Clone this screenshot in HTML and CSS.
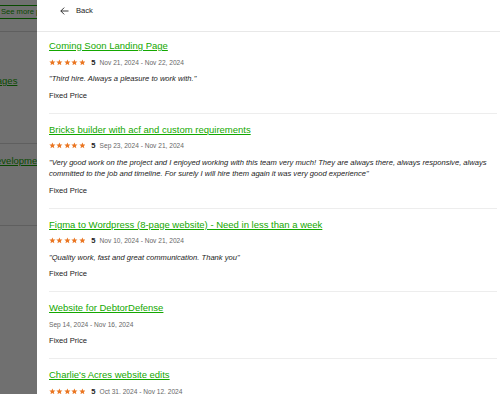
FILE: index.html
```html
<!DOCTYPE html>
<html lang="en">
  <head>
    <meta charset="UTF-8" />
    <meta name="viewport" content="width=device-width, initial-scale=1.0" />
    <title>Work history</title>
    <link rel="stylesheet" href="styles.css">
  </head>
  <body>
    <div class="page">
      <div class="bgTop">
        <span class="bgBtn">See more projects</span>
      </div>
      <div class="bgJob first">
        <a class="bgLink">Landing Pages</a>
        <p class="bgQuote">"Great work."</p>
      </div>
      <div class="bgJob second">
        <a class="bgLink">Website development</a>
      </div>
    </div>
    <div class="overlay"></div>
    <aside class="drawer">
      <div class="drawerHead">
        <button class="back">
          <svg width="9" height="8" viewBox="0 0 9 8" fill="none" stroke="#222" stroke-width="0.9">
            <path d="M8.5 4H0.8M4.2 0.6L0.8 4l3.4 3.4" />
          </svg>
          Back
        </button>
      </div>
      <ul class="history" id="history"></ul>
    </aside>
    <script>
      const jobs = [
        {
          title: "Coming Soon Landing Page",
          rating: 5,
          dates: "Nov 21, 2024 - Nov 22, 2024",
          quote: "\"Third hire. Always a pleasure to work with.\"",
        },
        {
          title: "Bricks builder with acf and custom requirements",
          rating: 5,
          dates: "Sep 23, 2024 - Nov 21, 2024",
          quote:
            "\"Very good work on the project and I enjoyed working with this team very much! They are always there, always responsive, always committed to the job and timeline. For surely I will hire them again it was very good experience\"",
        },
        {
          title: "Figma to Wordpress (8-page website) - Need in less than a week",
          rating: 5,
          dates: "Nov 10, 2024 - Nov 21, 2024",
          quote: "\"Quality work, fast and great communication. Thank you\"",
        },
        {
          title: "Website for DebtorDefense",
          rating: null,
          dates: "Sep 14, 2024 - Nov 16, 2024",
          quote: null,
        },
        {
          title: "Charlie's Acres website edits",
          rating: 5,
          dates: "Oct 31, 2024 - Nov 12, 2024",
          quote: "\"Great job, thanks!\"",
        },
      ];
      const star =
        '<svg class="star" viewBox="0 0 24 24"><path d="M12 1.5l3.1 7.1 7.7.6-5.9 5 1.8 7.6L12 17.8l-6.7 4 1.8-7.6-5.9-5 7.7-.6z"/></svg>';
      const list = document.getElementById("history");
      let html = "";
      for (let job of jobs) {
        let meta = "";
        if (job.rating) {
          meta += `<span class="stars">${star.repeat(5)}</span><b class="score">${job.rating}</b>`;
        }
        meta += `<span class="dates">${job.dates}</span>`;
        html += `<li class="job">
          <a class="jobTitle" href="#">${job.title}</a>
          <div class="meta">${meta}</div>
          ${job.quote ? `<p class="quote">${job.quote}</p>` : ""}
          <p class="type">Fixed Price</p>
        </li>`;
      }
      list.innerHTML = html;
    </script>
  </body>
</html>
```

FILE: styles.css
```css
body {
  margin: 0;
  background: #fff;
  font-family: "Liberation Sans", Arial, sans-serif;
  overflow: hidden;
}
.page {
  display: flex;
  flex-direction: column;
}
.bgTop {
  height: 31px;
  border-bottom: 1px solid #d8d8d8;
}
.bgBtn {
  display: inline-block;
  margin-left: -12px;
  padding: 1px 12px;
  border: 1px solid #14a800;
  border-radius: 8px;
  font-size: 7.6px;
  line-height: 10px;
  color: #14a800;
  white-space: nowrap;
}
.bgJob {
  display: flex;
  flex-direction: column;
  border-bottom: 1px solid #d8d8d8;
  white-space: nowrap;
}
.bgJob.first {
  height: 112px;
  padding-top: 42px;
  box-sizing: border-box;
}
.bgJob.second {
  height: 82px;
  padding-top: 10px;
  box-sizing: border-box;
}
.bgLink {
  font-size: 9.5px;
  line-height: 14px;
  color: #14a800;
  text-decoration: underline;
}
.first .bgLink {
  margin-left: -46px;
}
.second .bgLink {
  margin-left: -46px;
}
.bgQuote {
  margin: 16px 0 0 -46px;
  font-size: 7.6px;
  line-height: 12px;
  font-style: italic;
  color: #222;
}
.overlay {
  position: fixed;
  inset: 0;
  background: rgba(0, 0, 0, 0.56);
}
.drawer {
  position: fixed;
  top: 0;
  right: 0;
  bottom: 0;
  left: 37px;
  background: #fff;
  overflow: hidden;
}
.drawerHead {
  padding: 5px 23px 14px;
  border-bottom: 1px solid #e8e8e8;
}
.back {
  display: flex;
  align-items: center;
  gap: 7px;
  padding: 0;
  border: 0;
  background: none;
  font-family: inherit;
  font-size: 7.6px;
  line-height: 12px;
  color: #222;
}
.history {
  list-style: none;
  margin: 0;
  padding: 0 3px 0 12px;
}
.job {
  display: flex;
  flex-direction: column;
  padding: 9px 0 11px;
  border-bottom: 1px solid #ededed;
}
.job:first-child {
  padding-top: 7px;
}
.jobTitle {
  align-self: flex-start;
  font-size: 9.5px;
  line-height: 14px;
  color: #14a800;
  text-decoration: underline;
}
.meta {
  display: flex;
  align-items: center;
  margin-top: 3px;
  height: 12px;
}
.stars {
  display: flex;
  gap: 0.6px;
}
.star {
  width: 6.8px;
  height: 6.8px;
  fill: #ea7622;
}
.score {
  margin: 0 4px 0 6px;
  font-size: 7.6px;
  color: #222;
}
.dates {
  font-size: 6.6px;
  color: #676767;
}
.quote {
  margin: 5px 0 0;
  font-size: 7.6px;
  line-height: 11.5px;
  font-style: italic;
  color: #222;
}
.type {
  margin: 5px 0 0;
  font-size: 7.6px;
  line-height: 12px;
  color: #222;
}
```
